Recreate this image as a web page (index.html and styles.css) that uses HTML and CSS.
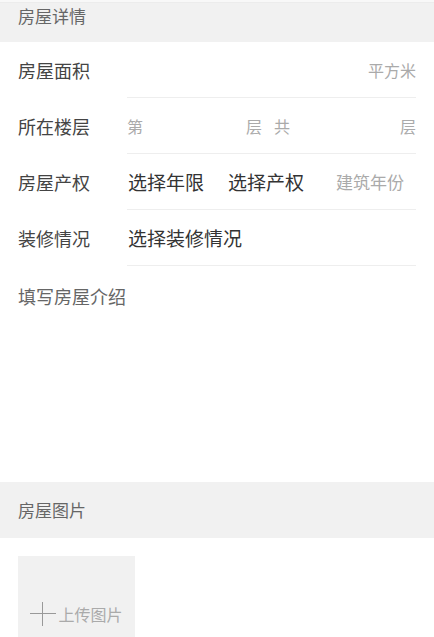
FILE: index.html
```html
<!DOCTYPE html>
<html lang="zh-CN">
<head>
    <meta charset="UTF-8">
    <meta name="viewport" content="width=device-width, initial-scale=1.0">
    <title>房屋详情</title>
    <link rel="stylesheet" href="styles.css">
</head>
<body>
    <div class="top-strip"></div>

    <!-- 房屋详情 -->
    <div class="section-title first">房屋详情</div>

    <div class="form-row">
        <span class="label">房屋面积</span>
        <div class="field">
            <input class="input grow" type="text">
            <span class="unit">平方米</span>
        </div>
    </div>

    <div class="form-row">
        <span class="label">所在楼层</span>
        <div class="field">
            <span class="unit">第</span>
            <input class="input floor" type="text">
            <span class="unit">层</span>
            <span class="unit gap">共</span>
            <input class="input grow" type="text">
            <span class="unit">层</span>
        </div>
    </div>

    <div class="form-row">
        <span class="label">房屋产权</span>
        <div class="field">
            <span class="select">选择年限</span>
            <span class="select">选择产权</span>
            <input class="input year" type="text" placeholder="建筑年份">
        </div>
    </div>

    <div class="form-row">
        <span class="label">装修情况</span>
        <div class="field">
            <span class="select">选择装修情况</span>
        </div>
    </div>

    <textarea class="intro" placeholder="填写房屋介绍"></textarea>

    <!-- 房屋图片 -->
    <div class="section-title">房屋图片</div>

    <div class="photos">
        <div class="upload">
            <svg class="plus" width="26" height="24" viewBox="0 0 26 24">
                <path d="M0 11.5H26M12.5 0V24" stroke="#999" stroke-width="1" fill="none"/>
            </svg>
            <span>上传图片</span>
        </div>
    </div>
</body>
</html>
```

FILE: styles.css
```css
/* General */
body {
    margin: 0;
    background: #fff;
    font-family: "Noto Sans CJK SC", "Noto Sans", sans-serif;
    color: #444;
}

.top-strip {
    height: 3px;
    background: #f8f8f8;
    border-bottom: 1px solid #ececec;
    box-sizing: border-box;
}

/* Section headers */
.section-title {
    height: 56px;
    line-height: 56px;
    padding-left: 18px;
    background: #f1f1f1;
    font-size: 17px;
    color: #666;
}

.section-title.first {
    height: 39px;
    line-height: 25px;
}

/* Form rows */
.form-row {
    display: flex;
    height: 56px;
}

.label {
    flex: none;
    width: 127px;
    padding-left: 18px;
    box-sizing: border-box;
    white-space: nowrap;
    font-size: 18px;
    line-height: 56px;
    color: #444;
}

.field {
    flex: 1;
    display: flex;
    align-items: center;
    min-width: 0;
    margin-right: 18px;
    border-bottom: 1px solid #eee;
    white-space: nowrap;
}

.input {
    border: none;
    outline: none;
    padding: 0;
    min-width: 0;
    width: 10px;
    font-family: inherit;
    font-size: 16px;
    background: transparent;
}

.input::placeholder {
    color: #aaa;
}

.input.grow {
    flex: 1;
}

.input.floor {
    flex: none;
    width: 103px;
}

.input.year {
    flex: 1;
    text-align: right;
    padding-right: 12px;
    font-size: 17px;
}

.unit {
    font-size: 16px;
    color: #aaa;
}

.unit.gap {
    margin-left: 12px;
}

.select {
    font-size: 19px;
    color: #333;
    margin-left: 1px;
    margin-right: 23px;
}

/* Intro */
.intro {
    display: block;
    width: 100%;
    height: 216px;
    box-sizing: border-box;
    padding: 19px 18px;
    border: none;
    outline: none;
    resize: none;
    font-family: inherit;
    font-size: 18px;
    line-height: 22px;
}

.intro::placeholder {
    color: #666;
}

/* Photos */
.photos {
    padding: 18px;
}

.upload {
    width: 117px;
    height: 115px;
    background: #f1f1f1;
    display: flex;
    align-items: center;
    justify-content: center;
    gap: 2px;
    font-size: 16px;
    color: #aaa;
}

.plus {
    display: block;
}
```
